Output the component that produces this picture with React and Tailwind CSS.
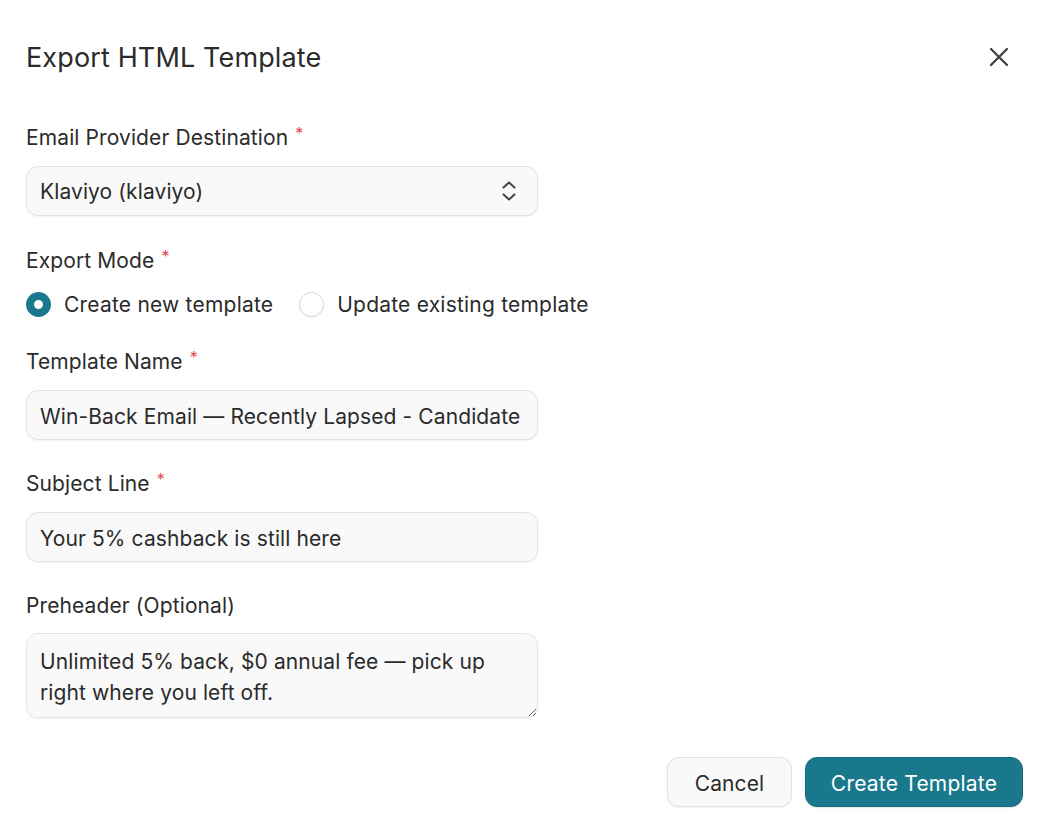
import React from "react";

function Label({ children, required }) {
  return (
    <div className="flex items-start h-[26px] text-[21px] leading-[28px] tracking-[0.005em] text-[#2b2b2b]">
      <span>{children}</span>
      {required && <span className="ml-[7px] mt-[1px] text-[16px] leading-[16px] text-[#e5484d]">*</span>}
    </div>
  );
}

const fieldCls =
  "w-[512px] h-[50px] rounded-[12px] border border-[#e3e3e3] bg-[#f9f9f9] px-[13px] pt-[2px] text-[21px] tracking-[0.005em] text-[#2b2b2b] shadow-[0_1px_2px_rgba(0,0,0,0.06)] outline-none";

export default function App() {
  return (
    <div
      className="w-[1054px] h-[840px] bg-white relative"
      style={{ fontFamily: "Inter, 'Noto Sans', sans-serif" }}
    >
      <div className="flex items-center justify-between pl-[26px] pr-[44px] pt-[40px]">
        <h1 className="text-[27px] leading-[36px] h-[34px] tracking-[0.005em] text-[#2b2b2b] font-normal">Export HTML Template</h1>
        <button className="w-[22px] h-[22px] flex items-center justify-center text-[#3d3d3d]">
          <svg width="20" height="20" viewBox="0 0 20 20" fill="none" stroke="currentColor" strokeWidth="2.2" strokeLinecap="round">
            <path d="M2 2L18 18M18 2L2 18" />
          </svg>
        </button>
      </div>

      <div className="pl-[26px] mt-[50px] flex flex-col">
        <Label required>Email Provider Destination</Label>
        <div className="relative mt-[16px] w-[512px]">
          <select className={fieldCls + " appearance-none"} defaultValue="klaviyo">
            <option value="klaviyo">Klaviyo (klaviyo)</option>
          </select>
          <svg className="absolute right-[21px] top-[14px] pointer-events-none" width="16" height="22" viewBox="0 0 16 22" fill="none" stroke="#444" strokeWidth="2" strokeLinecap="round" strokeLinejoin="round">
            <path d="M2.5 7.5L8 2.5L13.5 7.5" />
            <path d="M2.5 14.5L8 19.5L13.5 14.5" />
          </svg>
        </div>

        <div className="mt-[31px]">
          <Label required>Export Mode</Label>
        </div>
        <div className="mt-[18px] h-[26px] flex items-center gap-[26px] text-[21px] leading-[28px] tracking-[0.01em] text-[#2b2b2b]">
          <label className="flex items-center gap-[13px]">
            <span className="w-[25px] h-[25px] rounded-full border-[8px] border-[#1a798e] bg-white box-border" />
            <span className="pt-[2px]">Create new template</span>
          </label>
          <label className="flex items-center gap-[13px]">
            <span className="w-[25px] h-[25px] rounded-full border border-[#d6d6d6] bg-white shadow-[0_1px_2px_rgba(0,0,0,0.05)]" />
            <span className="pt-[2px]">Update existing template</span>
          </label>
        </div>

        <div className="mt-[31px]">
          <Label required>Template Name</Label>
        </div>
        <input className={fieldCls + " mt-[16px]"} defaultValue="Win-Back Email — Recently Lapsed - Candidate" />

        <div className="mt-[30px]">
          <Label required>Subject Line</Label>
        </div>
        <input className={fieldCls + " mt-[16px]"} defaultValue="Your 5% cashback is still here" />

        <div className="mt-[30px]">
          <Label>Preheader (Optional)</Label>
        </div>
        <textarea
          className="mt-[15px] w-[512px] h-[85px] rounded-[12px] border border-[#e3e3e3] bg-[#f9f9f9] pl-[13px] pr-[20px] pt-[12px] pb-[10px] text-[21px] leading-[31px] tracking-[0.005em] text-[#2b2b2b] shadow-[0_1px_2px_rgba(0,0,0,0.06)] outline-none resize-y"
          defaultValue="Unlimited 5% back, $0 annual fee — pick up right where you left off."
        />
      </div>

      <div className="flex justify-end gap-[13px] pr-[31px] mt-[39px]">
        <button className="h-[50px] w-[125px] pt-[3px] rounded-[12px] border border-[#e0e0e0] bg-[#f9f9f9] text-[21px] tracking-[0.005em] text-[#2b2b2b] shadow-[0_1px_2px_rgba(0,0,0,0.06)]">
          Cancel
        </button>
        <button className="h-[50px] w-[218px] pt-[3px] rounded-[12px] border border-[#176a7c] bg-[#1a788d] text-[21px] tracking-[0.01em] text-white shadow-[0_1px_2px_rgba(0,0,0,0.1)]">
          Create Template
        </button>
      </div>
    </div>
  );
}
